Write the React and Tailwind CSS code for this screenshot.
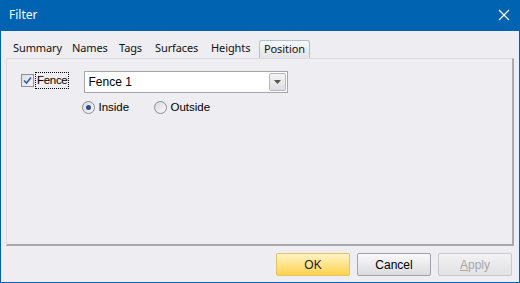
import { useState } from 'react';

const tabs = [
    { label: 'Summary', w: 'w-[59px]' },
    { label: 'Names', w: 'w-[47px]' },
    { label: 'Tags', w: 'w-[36px]' },
    { label: 'Surfaces', w: 'w-[56px]' },
    { label: 'Heights', w: 'w-[48px]' },
];

const ctl = { fontFamily: '"Liberation Sans", Arial, sans-serif' }

export default function App() {
    const [fence, setFence] = useState(true)
    const [side, setSide] = useState('inside')

    return (
        <div className="w-[520px] h-[283px] flex flex-col bg-[#0063b1] text-[12px] text-black" style={{ fontFamily: '"Segoe UI", "Noto Sans", sans-serif' }}>
            {/* title bar */}
            <div className="h-[31px] flex items-center justify-between pl-[9px] pr-[9px] text-white">
                <span className="text-[12px] -mt-[2px]">Filter</span>
                <svg width="12" height="12" viewBox="0 0 12 12" className="mr-[1px] -mt-[1px]">
                    <path d="M1 1 L11 11 M11 1 L1 11" stroke="white" strokeWidth="1.2" />
                </svg>
            </div>

            <div className="flex-1 mx-[1px] mb-[1px] bg-[#eeedf2] flex flex-col px-[5px]">
                {/* tabs */}
                <div className="flex items-end h-[27px] pl-[7px] text-[11px] tracking-[-0.1px] text-[#111]">
                    {tabs.map((t) => (
                        <span key={t.label} className={`${t.w} pb-[2px] leading-[16px]`}>{t.label}</span>
                    ))}
                    <span className="w-[51px] pl-[4px] h-[18px] leading-[16px] rounded-t-[3px] border border-b-0 border-[#a9c4d4] bg-gradient-to-b from-[#f7f8fa] to-[#e3e4e8]">Position</span>
                </div>

                {/* panel */}
                <div className="h-[188px] border border-[#dcdce2] border-r-[#a8a8ae] border-b-[#a8a8ae] border-r-2 border-b-2 pl-[14px] pt-[12px]" style={ctl}>
                    <div className="flex items-start">
                        <div className="flex items-center h-[17px] mt-[1px]">
                            <button
                                onClick={() => setFence(!fence)}
                                className="w-[13px] h-[13px] border border-[#8f8f9a] bg-gradient-to-br from-[#dcdce4] to-[#f6f6f8] flex items-center justify-center"
                            >
                                {fence && (
                                    <svg width="9" height="9" viewBox="0 0 9 9">
                                        <path d="M1 4.5 L3.5 7 L8 1.5" stroke="#3a5a9a" strokeWidth="1.6" fill="none" />
                                    </svg>
                                )}
                            </button>
                            <span className="ml-[1px] px-[1px] h-[17px] leading-[15px] border border-dotted border-black text-[11.5px] tracking-[-0.3px]">Fence</span>
                        </div>

                        <div className="ml-[15px] flex flex-col">
                            <div className="w-[204px] h-[22px] border border-[#a5a5ad] bg-white flex items-center justify-between pl-[3px] pr-[1px]">
                                <span>Fence 1</span>
                                <div className="w-[17px] h-[18px] border border-[#b6b6bc] rounded-[2px] bg-gradient-to-b from-[#f4f4f6] to-[#dedee2] flex items-center justify-center">
                                    <svg width="7" height="4" viewBox="0 0 7 4">
                                        <path d="M0 0 H7 L3.5 4 Z" fill="#555" />
                                    </svg>
                                </div>
                            </div>
                            <div className="flex items-center mt-[6px] -ml-[2px] text-[11.5px]">
                                <label className="flex items-center w-[72px]" onClick={() => setSide('inside')}>
                                    <span className="w-[13px] h-[13px] rounded-full border border-[#8a8a94] bg-gradient-to-br from-[#d8d8e0] to-[#fafafa] flex items-center justify-center">
                                        {side === 'inside' && <span className="w-[5px] h-[5px] rounded-full bg-[#2a4a8a]" />}
                                    </span>
                                    <span className="ml-[3px]">Inside</span>
                                </label>
                                <label className="flex items-center" onClick={() => setSide('outside')}>
                                    <span className="w-[13px] h-[13px] rounded-full border border-[#8a8a94] bg-gradient-to-br from-[#d8d8e0] to-[#fafafa] flex items-center justify-center">
                                        {side === 'outside' && <span className="w-[5px] h-[5px] rounded-full bg-[#2a4a8a]" />}
                                    </span>
                                    <span className="ml-[3px]">Outside</span>
                                </label>
                            </div>
                        </div>
                    </div>
                </div>

                {/* buttons */}
                <div className="flex justify-end gap-[7px] mt-[7px] pr-[2px]" style={ctl}>
                    <button className="w-[74px] h-[23px] rounded-[2px] border border-[#e5c365] bg-gradient-to-b from-[#fff4c4] via-[#ffe38a] to-[#ffd24a] text-[#222]">OK</button>
                    <button className="w-[74px] h-[23px] rounded-[2px] border border-[#a2a2aa] bg-gradient-to-b from-[#f9f9fb] to-[#dcdce0]">Cancel</button>
                    <button className="w-[74px] h-[23px] rounded-[2px] border border-[#cacace] bg-gradient-to-b from-[#f2f2f4] to-[#e2e2e4] text-[#a6a6aa]"><u>A</u>pply</button>
                </div>
            </div>
        </div>
    )
}
